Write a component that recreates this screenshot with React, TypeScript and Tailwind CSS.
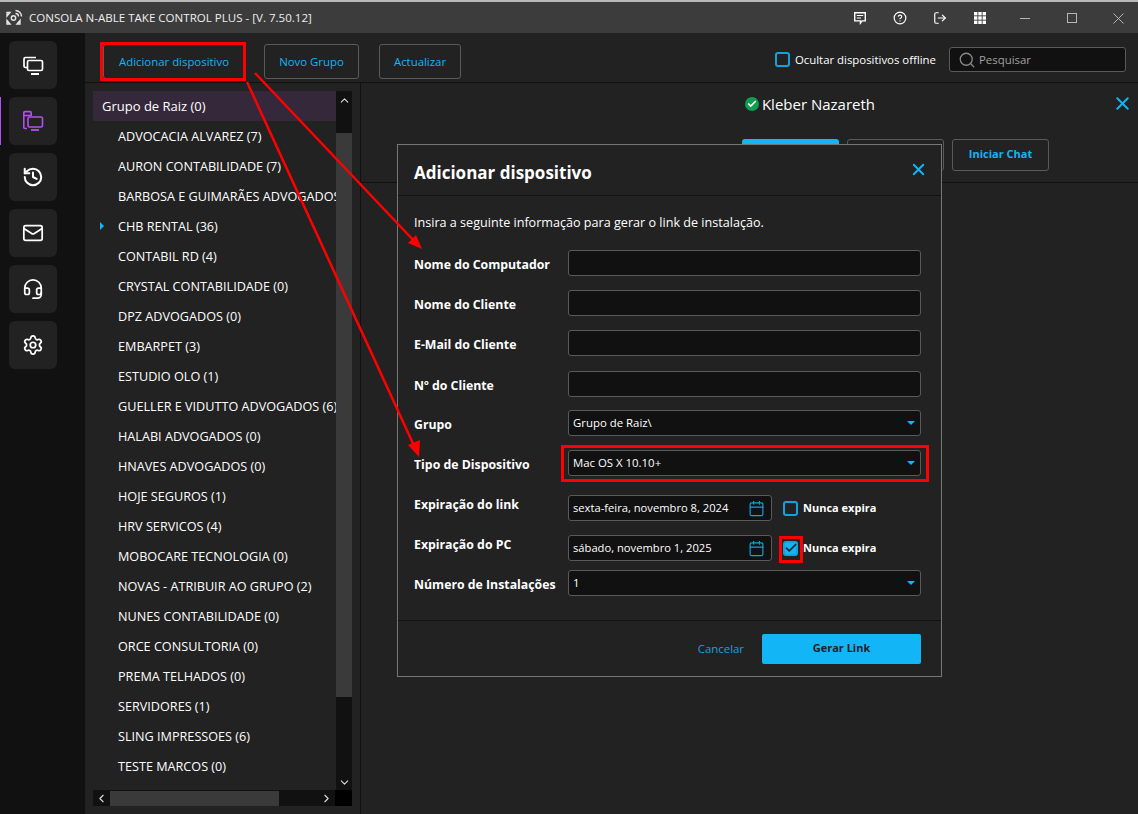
import { Calendar, Check, ChevronDown, ChevronLeft, ChevronRight, ChevronUp, CircleHelp, Headset, History, LogOut, Mail, Search, Settings, X } from "lucide-react";

const groups = [
    "ADVOCACIA ALVAREZ (7)",
    "AURON CONTABILIDADE (7)",
    "BARBOSA E GUIMARÃES ADVOGADOS (0)",
    "CHB RENTAL (36)",
    "CONTABIL RD (4)",
    "CRYSTAL CONTABILIDADE (0)",
    "DPZ ADVOGADOS (0)",
    "EMBARPET (3)",
    "ESTUDIO OLO (1)",
    "GUELLER E VIDUTTO ADVOGADOS (6)",
    "HALABI ADVOGADOS (0)",
    "HNAVES ADVOGADOS (0)",
    "HOJE SEGUROS (1)",
    "HRV SERVICOS (4)",
    "MOBOCARE TECNOLOGIA (0)",
    "NOVAS - ATRIBUIR AO GRUPO (2)",
    "NUNES CONTABILIDADE (0)",
    "ORCE CONSULTORIA (0)",
    "PREMA TELHADOS (0)",
    "SERVIDORES (1)",
    "SLING IMPRESSOES (6)",
    "TESTE MARCOS (0)",
];

function RailButton({ children, active }: { children: React.ReactNode; active?: boolean }) {
    return (
        <div className="relative flex items-center justify-center w-12 h-12 rounded-md bg-[#222222] ml-[9px]">
            {active && <div className="absolute left-[-9px] top-0 h-12 w-px bg-[#b44ff0]" />}
            {children}
        </div>
    );
}

function DevicesIcon({ color }: { color: string }) {
    return (
        <svg width="22" height="22" viewBox="0 0 22 22" fill="none" stroke={color} strokeWidth="1.7">
            <path d="M14 3.5H3.5a1.5 1.5 0 0 0-1.5 1.5v7a1.5 1.5 0 0 0 1.5 1.5H5" />
            <rect x="5.5" y="6.5" width="15" height="10" rx="1.5" />
            <path d="M9 20h8" strokeWidth="2" />
        </svg>
    );
}

function GroupDevicesIcon() {
    return (
        <svg width="22" height="22" viewBox="0 0 22 22" fill="none" stroke="#b44ff0" strokeWidth="1.6">
            <path d="M5 18.5H3a1.2 1.2 0 0 1-1.2-1.2V2.8A1.2 1.2 0 0 1 3 1.6h5a1.2 1.2 0 0 1 1.2 1.2V6" />
            <path d="M2 5.5h7" />
            <rect x="6" y="7" width="14.5" height="10" rx="1.5" />
            <path d="M9 20h8" strokeWidth="1.8" />
        </svg>
    );
}

function ChatIcon() {
    return (
        <svg width="14" height="14" viewBox="0 0 14 14" fill="none" stroke="#ffffff" strokeWidth="1.4" className="mr-[26px]">
            <path d="M1.7 1.7h10.6v8.2H9l-1.6 2.2v-2.2H1.7z" />
            <path d="M3.8 4.5h6.4M3.8 7h4.2" strokeWidth="1.2" />
        </svg>
    );
}

function GridIcon() {
    return (
        <svg width="14" height="14" viewBox="0 0 14 14" fill="#ffffff" className="mr-[33px]">
            <rect x="1" y="1" width="3.4" height="3.4" />
            <rect x="5.3" y="1" width="3.4" height="3.4" />
            <rect x="9.6" y="1" width="3.4" height="3.4" />
            <rect x="1" y="5.3" width="3.4" height="3.4" />
            <rect x="5.3" y="5.3" width="3.4" height="3.4" />
            <rect x="9.6" y="5.3" width="3.4" height="3.4" />
            <rect x="1" y="9.6" width="3.4" height="3.4" />
            <rect x="5.3" y="9.6" width="3.4" height="3.4" />
            <rect x="9.6" y="9.6" width="3.4" height="3.4" />
        </svg>
    );
}

function WindowButtons() {
    return (
        <svg width="104" height="12" viewBox="0 0 104 12" fill="none" stroke="#b5b5b5" strokeWidth="1" className="mr-[14px]">
            <path d="M0 6.5h10" />
            <rect x="47.5" y="1.5" width="9" height="9" />
            <path d="M93.5 1.5l10 10M103.5 1.5l-10 10" />
        </svg>
    );
}

function DialogInput({ label, className }: { label: string; className: string }) {
    return (
        <div className={`flex items-center ${className}`}>
            <div className="w-[154px] pt-1 font-bold text-[12.3px] text-white">{label}</div>
            <div className="w-[353px] h-[26px] rounded-[3px] border border-[#5a5a5a] bg-[#111111]" />
        </div>
    );
}

function DialogSelect({ label, value, className }: { label: string; value: string; className: string }) {
    return (
        <div className={`flex items-center ${className}`}>
            <div className="w-[154px] pt-1 font-bold text-[12.3px] text-white whitespace-nowrap">{label}</div>
            <div className="flex items-center justify-between w-[353px] h-[26px] rounded-[3px] border border-[#5a5a5a] bg-[#111111] pl-1 pr-[5px] text-[11.4px] text-white">
                <span>{value}</span>
                <span className="w-0 h-0 border-x-[4px] border-x-transparent border-t-[4px] border-t-[#12b5f5]" />
            </div>
        </div>
    );
}

function DialogDate({ label, value, checked, className }: { label: string; value: string; checked?: boolean; className: string }) {
    return (
        <div className={`flex items-center ${className}`}>
            <div className="w-[154px] -mt-[6px] font-bold text-[12.3px] text-white">{label}</div>
            <div className="flex items-center justify-between w-[204px] h-[26px] rounded-[3px] border border-[#5a5a5a] bg-[#111111] pl-1 pr-[6px] text-[11.2px] text-white">
                <span>{value}</span>
                <Calendar size={17} strokeWidth={1.6} className="text-[#12a3dc]" />
            </div>
            <div className={`ml-[11px] flex items-center justify-center w-[15px] h-[15px] rounded-[3px] border-2 border-[#12a3dc] ${checked ? "bg-[#12b5f5]" : ""}`}>
                {checked && <Check size={14} strokeWidth={2.8} className="shrink-0 text-[#222222]" />}
            </div>
            <span className="ml-[5px] font-bold text-[11px] text-white">Nunca expira</span>
        </div>
    );
}

export default function App() {
    return (
        <div className="relative w-[1138px] h-[814px] overflow-hidden bg-[#222222] text-[13px] text-white font-['Open_Sans','Noto_Sans',sans-serif]">
            {/* title bar */}
            <div className="flex items-center h-[33px] border-t-2 border-[#b9b9b9] bg-[#3c3c3c]">
                <svg width="18" height="18" viewBox="0 0 18 18" fill="none" stroke="#e6e6e6" strokeWidth="1.4" className="ml-[5px]">
                    <circle cx="8.5" cy="9" r="2.2" />
                    <path d="M2 3.5h3L2 7zM2 15h3l-3-3.5zM15 15h-3l3-3.5z" />
                    <path d="M10.5 1.5a6 6 0 0 1 6 6M10.5 4.5a3 3 0 0 1 3 3" />
                </svg>
                <span className="ml-[6px] text-[11.55px] text-[#eeeeee]">CONSOLA N-ABLE TAKE CONTROL PLUS - [V. 7.50.12]</span>
                <div className="ml-auto flex items-center">
                    <ChatIcon />
                    <CircleHelp size={14} strokeWidth={2} className="text-white mr-[26px]" />
                    <LogOut size={14} strokeWidth={2} className="text-white mr-[26px]" />
                    <GridIcon />
                    <WindowButtons />
                </div>
            </div>

            <div className="flex h-[781px]">
                {/* left rail */}
                <div className="flex flex-col gap-2 w-[85px] pt-2 bg-[#111111]">
                    <RailButton><DevicesIcon color="#ffffff" /></RailButton>
                    <RailButton active><GroupDevicesIcon /></RailButton>
                    <RailButton><History size={22} strokeWidth={2.2} className="text-white" /></RailButton>
                    <RailButton><Mail size={22} strokeWidth={1.9} className="text-white" /></RailButton>
                    <RailButton><Headset size={22} strokeWidth={1.9} className="text-white" /></RailButton>
                    <RailButton><Settings size={22} strokeWidth={1.9} className="text-white" /></RailButton>
                </div>

                <div className="flex flex-col flex-1 min-w-0">
                    {/* toolbar */}
                    <div className="flex items-center h-[50px] border-b border-[#111111] pl-[18px] pr-3 pt-2 shrink-0">
                        <button className="w-[142px] h-[35px] rounded-[3px] text-[11.4px] text-[#12b5f5] border border-[#5a5a5a]">Adicionar dispositivo</button>
                        <button className="ml-[19px] w-[95px] h-[35px] rounded-[3px] text-[11.4px] text-[#12b5f5] border border-[#5a5a5a]">Novo Grupo</button>
                        <button className="ml-[20px] w-[82px] h-[35px] rounded-[3px] text-[11.4px] text-[#12b5f5] border border-[#5a5a5a]">Actualizar</button>
                        <div className="ml-auto -mt-1 flex items-center">
                            <div className="w-[15px] h-[15px] rounded-[3px] border-2 border-[#12a3dc]" />
                            <span className="ml-[5px] text-[11.4px] text-white">Ocultar dispositivos offline</span>
                            <div className="ml-[13px] flex items-center w-[177px] h-[25px] rounded-[3px] border border-[#5a5a5a] bg-[#111111] pl-2 text-[11.4px] text-[#a0a0a0]">
                                <Search size={18} strokeWidth={1.7} className="text-[#8a8a8a] mr-[3px]" />
                                Pesquisar
                            </div>
                        </div>
                    </div>

                    <div className="flex flex-1 min-h-0">
                        {/* device tree */}
                        <div className="w-[276px] shrink-0 border-r border-[#111111] pl-2 pr-2 pt-2">
                            <div className="flex h-[699px]">
                                <div className="w-[243px] overflow-hidden">
                                    <div className="flex items-center h-[30px] pl-[9px] pt-[2px] bg-[#35283b] whitespace-nowrap">Grupo de Raiz (0)</div>
                                    {groups.map((group) => (
                                        <div key={group} className="relative flex items-center h-[30px] pl-[25px] text-[12.65px] whitespace-nowrap">
                                            {group === "CHB RENTAL (36)" && (
                                                <span className="absolute left-[7px] top-[11px] w-0 h-0 border-y-[4px] border-y-transparent border-l-[4px] border-l-[#12b5f5]" />
                                            )}
                                            {group}
                                        </div>
                                    ))}
                                </div>
                                <div className="flex flex-col w-4 bg-[#111111]">
                                    <div className="flex items-center justify-center h-[42px] pb-6">
                                        <ChevronUp size={13} strokeWidth={2} className="text-[#dddddd]" />
                                    </div>
                                    <div className="h-[564px] bg-[#3a3a3a]" />
                                    <div className="flex items-end justify-center flex-1 pb-[1px]">
                                        <ChevronDown size={13} strokeWidth={2} className="text-[#dddddd]" />
                                    </div>
                                </div>
                            </div>
                            <div className="flex items-center w-[259px] h-4 bg-[#111111]">
                                <div className="flex items-center justify-center w-[17px]">
                                    <ChevronLeft size={13} strokeWidth={2} className="text-[#dddddd]" />
                                </div>
                                <div className="w-[169px] h-[15px] bg-[#3a3a3a]" />
                                <div className="flex items-center justify-end flex-1 pr-[2px]">
                                    <ChevronRight size={13} strokeWidth={2} className="text-[#dddddd]" />
                                </div>
                                <div className="w-[17px] h-full bg-black" />
                            </div>
                        </div>

                        {/* device detail */}
                        <div className="flex flex-col flex-1 min-w-0">
                            <div className="relative flex flex-col h-[100px] border-b border-[#111111]">
                                <div className="flex items-center justify-center gap-[3px] mt-[10px] pl-[121px] text-[15px]">
                                    <span className="flex items-center justify-center w-[14px] h-[14px] rounded-full bg-[#0f9d4f]">
                                        <Check size={10} strokeWidth={4} className="text-white" />
                                    </span>
                                    Kleber Nazareth
                                </div>
                                <X size={21} strokeWidth={2.2} className="absolute right-[5px] top-[10px] text-[#12b5f5]" />
                                <div className="flex ml-[381px] mt-[23px] gap-2">
                                    <div className="w-[97px] h-[32px] rounded-[3px] bg-[#12b5f5]" />
                                    <div className="w-[97px] h-[32px] rounded-[3px] border border-[#5a5a5a]" />
                                    <div className="flex items-center justify-center w-[97px] h-[32px] rounded-[3px] border border-[#5a5a5a] text-[11px] font-bold text-[#12b5f5]">Iniciar Chat</div>
                                </div>
                            </div>
                        </div>
                    </div>
                </div>
            </div>

            {/* add device dialog */}
            <div className="absolute left-[397px] top-[144px] flex flex-col w-[545px] h-[533px] border border-[#777777] bg-[#222222]">
                <div className="relative flex items-center h-[51px] pt-[6px] shrink-0 border-b border-[#111111] pl-4 text-[17px] font-bold">
                    Adicionar dispositivo
                    <X size={19} strokeWidth={2.4} className="absolute right-[13px] top-[15px] text-[#12b5f5]" />
                </div>
                <div className="flex flex-col flex-1 pl-4 pt-[18px]">
                    <div className="h-[18px] text-[12.6px] leading-[18px]">Insira a seguinte informação para gerar o link de instalação.</div>
                    <DialogInput label="Nome do Computador" className="mt-[18px]" />
                    <DialogInput label="Nome do Cliente" className="mt-[14px]" />
                    <DialogInput label="E-Mail do Cliente" className="mt-[14px]" />
                    <DialogInput label="Nº do Cliente" className="mt-[15px]" />
                    <DialogSelect label="Grupo" value="Grupo de Raiz\" className="mt-[13px]" />
                    <DialogSelect label="Tipo de Dispositivo" value="Mac OS X 10.10+" className="mt-[14px]" />
                    <DialogDate label="Expiração do link" value="sexta-feira, novembro 8, 2024" className="mt-[19px]" />
                    <DialogDate label="Expiração do PC" value="sábado, novembro 1, 2025" checked className="mt-[14px]" />
                    <DialogSelect label="Número de Instalações" value="1" className="mt-[9px]" />
                </div>
                <div className="flex items-center justify-end h-[56px] shrink-0 border-t border-[#111111] pr-5">
                    <span className="text-[11.4px] text-[#12a3dc] mr-[18px]">Cancelar</span>
                    <button className="w-[159px] h-[30px] rounded-[2px] bg-[#12b5f5] text-[11px] font-bold text-[#222222]">Gerar Link</button>
                </div>
            </div>

            {/* red annotations drawn on top of the screenshot */}
            <div className="absolute left-[100px] top-[42px] w-[146px] h-[39px] border-[3px] border-[#ff0000]" />
            <div className="absolute left-[561px] top-[445px] w-[368px] h-[37px] border-[3px] border-[#ff0000]" />
            <div className="absolute left-[779px] top-[536px] w-[24px] h-[27px] border-[3px] border-[#ff0000]" />
            <svg width="1138" height="814" className="absolute left-0 top-0 pointer-events-none">
                <line x1="255" y1="73" x2="416" y2="243" stroke="#ff0000" strokeWidth="2.5" />
                <polygon points="422,249 408,243 416,235" fill="#ff0000" />
                <line x1="247" y1="82" x2="416" y2="450" stroke="#ff0000" strokeWidth="2.5" />
                <polygon points="419,457 408,445 420,440" fill="#ff0000" />
            </svg>
        </div>
    );
}
